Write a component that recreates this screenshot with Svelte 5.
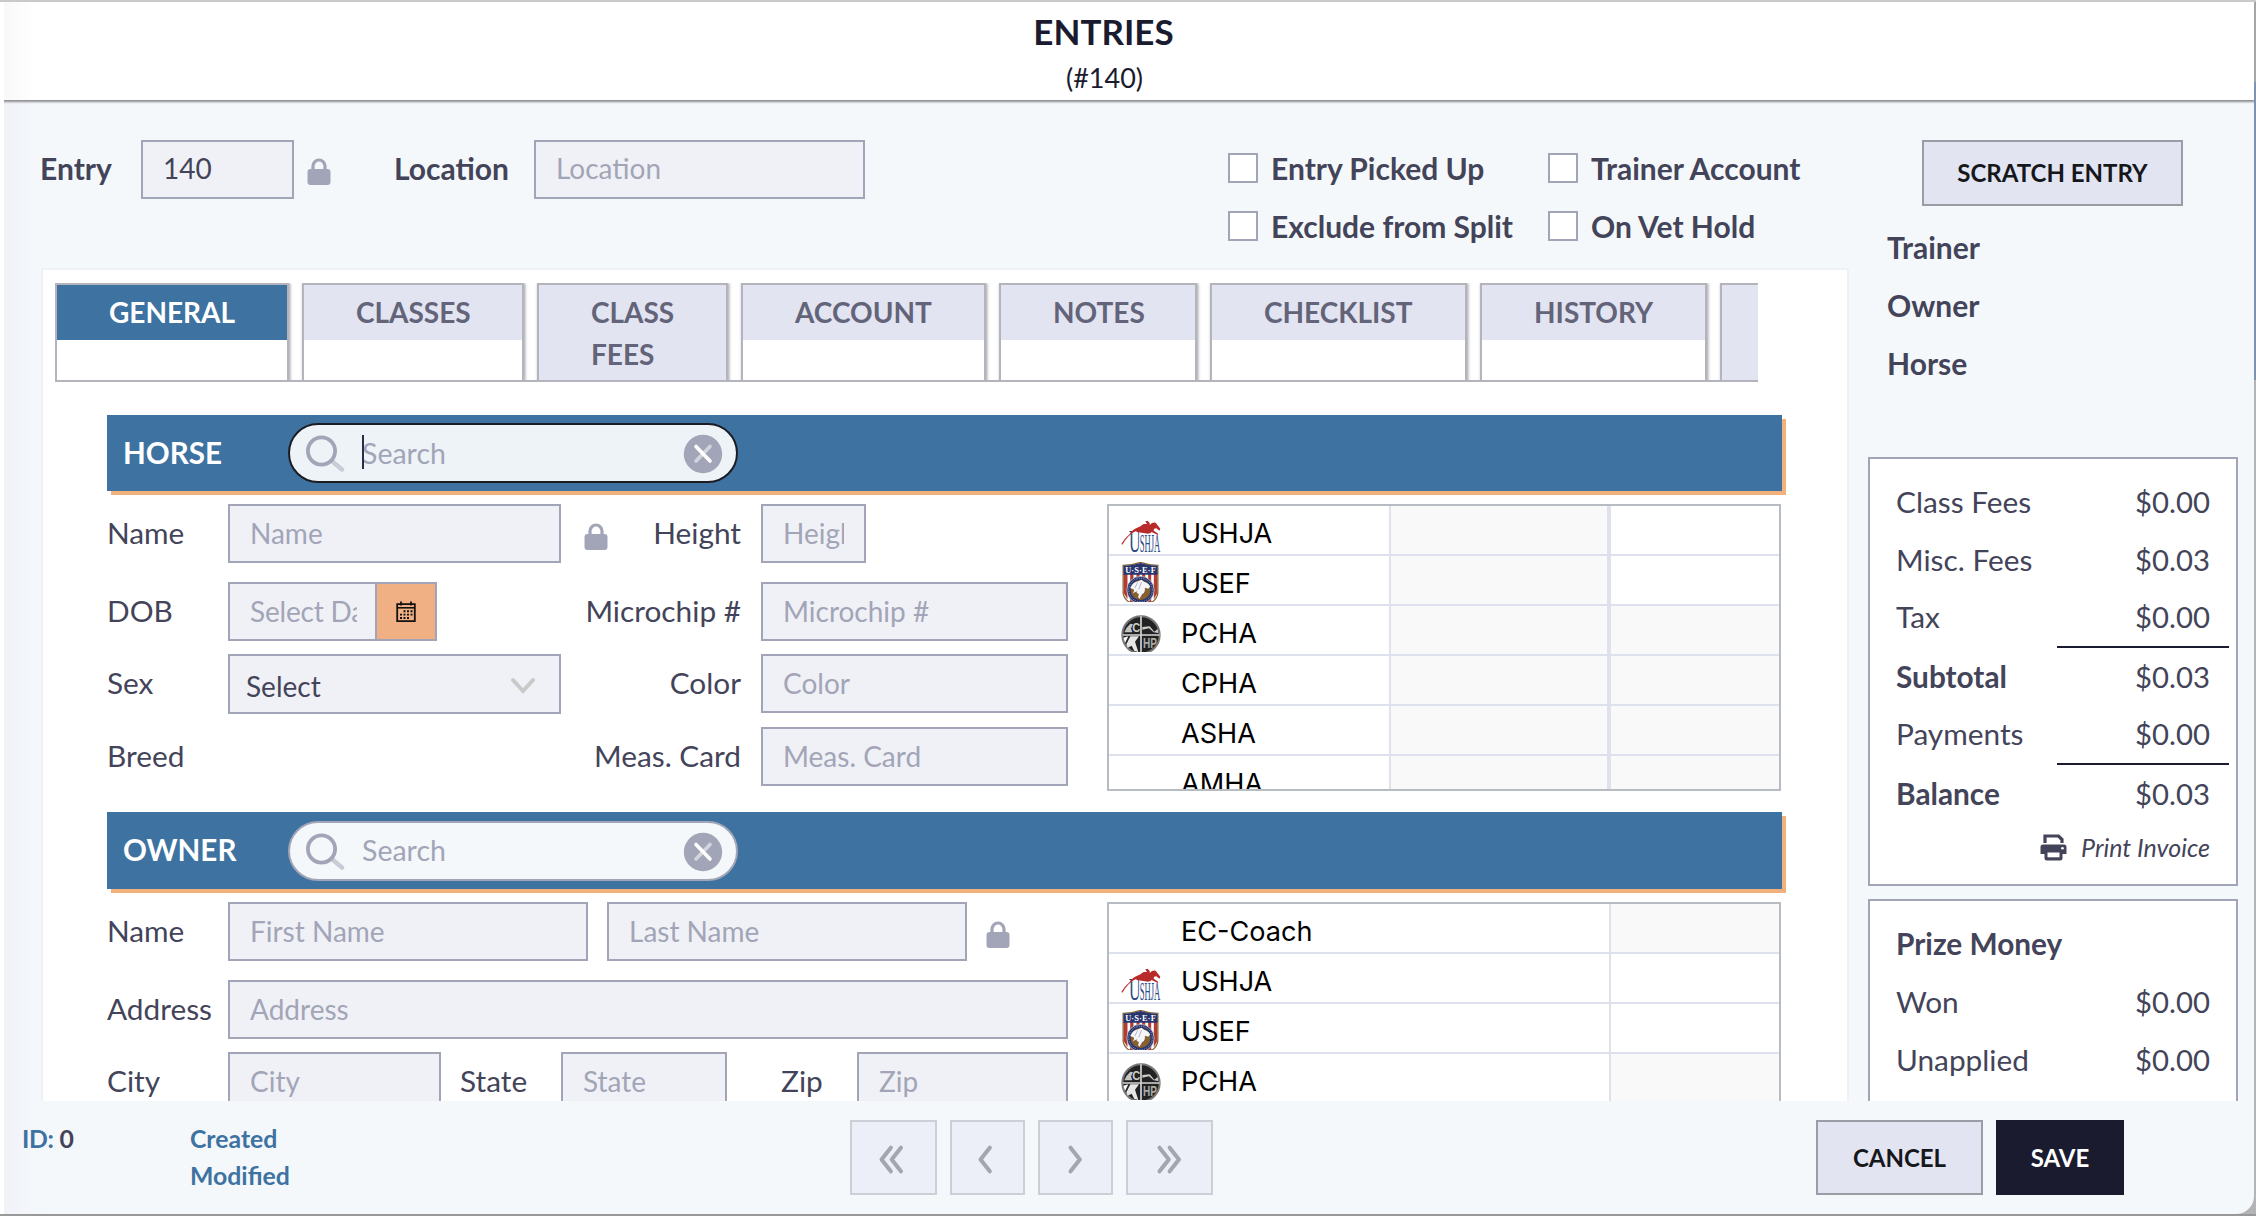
<script>
  const tabs = [
    { label: 'GENERAL', width: 234, active: true },
    { label: 'CLASSES', width: 222 },
    { label: 'CLASS FEES', width: 191, tall: true },
    { label: 'ACCOUNT', width: 245 },
    { label: 'NOTES', width: 198 },
    { label: 'CHECKLIST', width: 257 },
    { label: 'HISTORY', width: 227 },
    { label: '', width: 120, tall: true }
  ];
  const horseOrgs = [
    { name: 'USHJA', logo: 'ushja', open: true },
    { name: 'USEF', logo: 'usef', open: true },
    { name: 'PCHA', logo: 'pcha' },
    { name: 'CPHA' },
    { name: 'ASHA' },
    { name: 'AMHA' }
  ];
  const ownerOrgs = [
    { name: 'EC-Coach' },
    { name: 'USHJA', logo: 'ushja', open: true },
    { name: 'USEF', logo: 'usef', open: true },
    { name: 'PCHA', logo: 'pcha' }
  ];
  const checks = ['Entry Picked Up', 'Trainer Account', 'Exclude from Split', 'On Vet Hold'];
</script>

{#snippet lock()}
  <svg class="lock" width="24" height="28" viewBox="0 0 24 28">
    <path d="M6 12V8a6 6 0 0 1 12 0v4" fill="none" stroke="#a2a5b7" stroke-width="3.2" />
    <rect x="0.5" y="11" width="23" height="16" rx="3" fill="#a2a5b7" />
  </svg>
{/snippet}

{#snippet logo(kind)}
  {#if kind === 'ushja'}
    <svg class="logo" width="40" height="32" viewBox="0 0 120 96">
      <text transform="translate(24 95) scale(0.5 1)" font-family="Liberation Serif" font-size="96" fill="#2c4a86">U</text>
      <text transform="translate(56 95) scale(0.34 1)" font-family="Liberation Serif" font-size="76" fill="#2c4a86">SHJA</text>
      <path d="M1 72Q12 54 26 42Q34 28 52 22Q58 20 62 16L68 12L78 12L73 4L79 2L84 6Q88 10 86 15Q94 6 104 8L118 26L115 32L106 25L99 26L98 32L110 40L112 46L100 40L92 36Q86 44 72 40Q56 38 44 34Q24 42 4 74Z" fill="#b92b2b" />
    </svg>
  {:else if kind === 'usef'}
    <svg class="logo usef" width="37" height="40" viewBox="0 0 110 120">
      <path d="M3 10Q30 10 55 1Q80 10 107 10V92Q106 108 90 120H20Q4 108 3 92Z" fill="#fff" stroke="#8a6a3a" stroke-width="4" />
      <path d="M5 34H16V112L5 94ZM24 34H34V120H24ZM43 34H52V120H43ZM60 34H69V120H60ZM78 34H87V120H78ZM95 34H105V94L95 112Z" fill="#b53a34" />
      <path d="M4 11Q30 11 55 3Q80 11 106 11V38H4Z" fill="#28356e" />
      <text x="9" y="34" font-family="Liberation Serif" font-weight="bold" font-size="25" textLength="92" fill="#fff">U·S·E·F</text>
      <circle cx="55" cy="84" r="41" fill="#28356e" stroke="#e8e2d8" stroke-width="2" />
      <circle cx="55" cy="84" r="30" fill="#866030" />
      <circle cx="55" cy="84" r="35.500" fill="none" stroke="#a9aecb" stroke-width="3" stroke-dasharray="3 4" />
      <path d="M24 78Q32 60 48 58L58 53L66 60Q78 62 84 74L78 80L68 77Q70 92 60 96L52 110L48 106L50 96Q42 94 44 88L32 94Q38 86 34 82Z" fill="#f5f5f8" />
      <path d="M46 62L38 78M58 60L50 82" stroke="#8f94b4" stroke-width="2" />
    </svg>
  {:else if kind === 'pcha'}
    <svg class="logo" width="40" height="37" viewBox="0 0 120 111">
      <circle cx="60" cy="60" r="56" fill="#222" stroke="#777" stroke-width="6" />
      <path d="M60 4V111M5 60H116" stroke="#d5d5d5" stroke-width="5" />
      <path d="M10 52Q16 36 28 26L36 28L30 40L34 52Z" fill="#c4c4c4" />
      <path d="M64 44L84 40L98 52L112 54L110 42L100 50L86 34L64 36Z" fill="#ccc" />
      <path d="M28 64L54 64L42 80L52 111L40 108L32 92L20 98L16 88Z" fill="#e6e6e6" />
      <path d="M7 68L22 64L12 84Z" fill="#fff" />
      <text x="34" y="50" font-family="Liberation Sans" font-weight="bold" font-size="36" textLength="24" lengthAdjust="spacingAndGlyphs" fill="#ccc">C</text>
      <text x="66" y="100" font-family="Liberation Sans" font-weight="bold" font-size="42" textLength="42" lengthAdjust="spacingAndGlyphs" fill="#aaa">HP</text>
    </svg>
  {/if}
{/snippet}

{#snippet banner(title, focused)}
  <div class="banner" class:second={!focused}>
    <h2>{title}</h2>
    <div class="search" class:focused>
      <svg width="40" height="40" viewBox="0 0 40 40">
        <path d="M28 28L37 35.5" stroke="#c9cbd6" stroke-width="4.4" stroke-linecap="round" />
        <circle cx="16.5" cy="17" r="13.6" fill="none" stroke="#a2a5b7" stroke-width="3.8" />
      </svg>
      <div class="query">
        {#if focused}<span class="caret"></span>{/if}
        <input placeholder="Search" />
      </div>
      <svg width="40" height="40" viewBox="0 0 40 40">
        <circle cx="20" cy="20" r="19.2" fill="#a2a5b7" />
        <path d="M27 12.5L13 27" stroke="#d3d5de" stroke-width="3.6" stroke-linecap="round" />
        <path d="M13 12.5L27 27" stroke="#fff" stroke-width="3.6" stroke-linecap="round" />
      </svg>
    </div>
  </div>
{/snippet}

{#snippet doubleChevron()}
  <path d="M14 2L3 16L14 30M26 2L15 16L26 30" />
{/snippet}

<div class="dialog">
  <header>
    <h1>ENTRIES</h1>
    <p>(#140)</p>
  </header>

  <div class="body">
    <main>
      <div class="top">
        <b class="lbl entry-lbl">Entry</b>
        <input class="entry" value="140" />
        {@render lock()}
        <b class="lbl loc-lbl">Location</b>
        <input class="location" placeholder="Location" />
        <div class="checks">
          {#each checks as c}
            <div class="check"><span class="box"></span><b class="lbl">{c}</b></div>
          {/each}
        </div>
      </div>

      <section class="panel">
        <nav>
          {#each tabs as t}
            <div class="tab" class:active={t.active} class:tall={t.tall} style:width="{t.width}px">
              <span>{t.label}</span>
            </div>
          {/each}
        </nav>

        {@render banner('HORSE', true)}
        <div class="split">
          <div class="form horse">
            <span class="lbl">Name</span>
            <input placeholder="Name" />
            <div class="mid">{@render lock()}<span class="lbl">Height</span></div>
            <input class="height" placeholder="Height" />

            <span class="lbl">DOB</span>
            <div class="date">
              <input placeholder="Select Date" />
              <span class="cal">
                <svg width="20" height="22" viewBox="0 0 20 22">
                  <path d="M1.2 3.2H18.8V20.2H1.2Z" fill="none" stroke="#111" stroke-width="1.8" />
                  <path d="M1 6.8H19" stroke="#111" stroke-width="1.6" />
                  <path d="M5 0.5V4.5M15 0.5V4.5" stroke="#111" stroke-width="1.8" />
                  <path d="M7.5 10.2H16.5M4 13.6H16.5M4 17H13" stroke="#111" stroke-width="1.9" stroke-dasharray="2 1.5" />
                </svg>
              </span>
            </div>
            <div class="mid"><span class="lbl">Microchip #</span></div>
            <input placeholder="Microchip #" />

            <span class="lbl">Sex</span>
            <div class="select">
              Select
              <svg width="26" height="18" viewBox="0 0 26 18">
                <path d="M3 3L13 14L23 3" fill="none" stroke="#c9c9c9" stroke-width="4" stroke-linecap="round" />
              </svg>
            </div>
            <div class="mid"><span class="lbl">Color</span></div>
            <input placeholder="Color" />

            <span class="lbl">Breed</span>
            <span></span>
            <div class="mid"><span class="lbl">Meas. Card</span></div>
            <input placeholder="Meas. Card" />
          </div>
          <div class="orgs horse-orgs">
            {#each horseOrgs as o}
              <div class="org">
                <span class="icon">{@render logo(o.logo)}</span>
                <span class="name">{o.name}</span>
                <span class="mid-cell"></span>
                <span class="end" class:open={o.open}></span>
              </div>
            {/each}
          </div>
        </div>

        {@render banner('OWNER', false)}
        <div class="split">
          <div class="form owner">
            <div class="line">
              <span class="lbl first">Name</span>
              <input class="fname" placeholder="First Name" />
              <input class="fname" placeholder="Last Name" />
              {@render lock()}
            </div>
            <div class="line">
              <span class="lbl first">Address</span>
              <input class="address" placeholder="Address" />
            </div>
            <div class="line">
              <span class="lbl first">City</span>
              <input class="city" placeholder="City" />
              <span class="lbl state-lbl">State</span>
              <input class="state" placeholder="State" />
              <span class="lbl zip-lbl">Zip</span>
              <input class="zip" placeholder="Zip" />
            </div>
          </div>
          <div class="orgs">
            {#each ownerOrgs as o}
              <div class="org wide">
                <span class="icon">{@render logo(o.logo)}</span>
                <span class="name">{o.name}</span>
                <span class="end" class:open={o.open}></span>
              </div>
            {/each}
          </div>
        </div>
      </section>
    </main>

    <aside>
      <button class="btn scratch">SCRATCH ENTRY</button>
      <div class="people"><b>Trainer</b><b>Owner</b><b>Horse</b></div>
      <div class="card totals">
        <div class="money"><span>Class Fees</span><span>$0.00</span></div>
        <div class="money"><span>Misc. Fees</span><span>$0.03</span></div>
        <div class="money tax"><span>Tax</span><span>$0.00</span></div>
        <hr />
        <div class="money"><b>Subtotal</b><span>$0.03</span></div>
        <div class="money pay"><span>Payments</span><span>$0.00</span></div>
        <hr />
        <div class="money"><b>Balance</b><span>$0.03</span></div>
        <div class="print">
          <svg width="27" height="27" viewBox="0 0 27 27">
            <path d="M5 9V2H18.5L22 5.5V9" fill="none" stroke="#434459" stroke-width="3.2" />
            <path d="M3 10.5H24Q26.5 10.5 26.5 13V20H22.5V24Q22.5 26.5 20 26.5H7Q4.500 26.500 4.500 24V20H0.500V13Q0.500 10.500 3 10.500Z" fill="#434459" />
            <rect x="7.500" y="18.500" width="12" height="4.800" fill="#fff" />
            <circle cx="22.500" cy="14.300" r="1.300" fill="#fff" />
          </svg>
          <i>Print Invoice</i>
        </div>
      </div>
      <div class="card prize">
        <div class="money"><b>Prize Money</b></div>
        <div class="money"><span>Won</span><span>$0.00</span></div>
        <div class="money"><span>Unapplied</span><span>$0.00</span></div>
      </div>
    </aside>
  </div>

  <footer>
    <div class="id">ID: <span>0</span></div>
    <div class="stamps"><div>Created</div><div>Modified</div></div>
    <div class="pager">
      <button class="wide-btn"><svg width="29" height="32" viewBox="0 0 29 32">{@render doubleChevron()}</svg></button>
      <button><svg width="17" height="32" viewBox="0 0 17 32"><path d="M14 2L3 16L14 30" /></svg></button>
      <button><svg class="flip" width="17" height="32" viewBox="0 0 17 32"><path d="M14 2L3 16L14 30" /></svg></button>
      <button class="wide-btn"><svg class="flip" width="29" height="32" viewBox="0 0 29 32">{@render doubleChevron()}</svg></button>
    </div>
    <button class="btn cancel">CANCEL</button>
    <button class="btn save">SAVE</button>
  </footer>
</div>

<style>
  :global(body) {
    background: linear-gradient(#c9c9c9 0 2px, transparent 2px 1214px, #999 1214px),
      linear-gradient(90deg, #fff 0 50%, transparent 50%),
      linear-gradient(#a5a5a8 0 82px, #7d92b4 82px 380px, #b4b4b6 380px);
    font-family: Lato, 'Liberation Sans', sans-serif;
    color: #434459;
    overflow: hidden;
  }
  * { box-sizing: border-box; }
  h1, h2, p { margin: 0; }
  .dialog {
    width: 2250px;
    height: 1212px;
    margin: 2px 2px 2px 4px;
    background: linear-gradient(90deg, #f1f2f8, #f4f8fb 37px);
    border-radius: 0 0 18px 0;
    overflow: hidden;
    display: flex;
    flex-direction: column;
  }
  header {
    height: 98px;
    flex: none;
    background: linear-gradient(90deg, #f8f8f9, #fff 32px);
    box-shadow: 0 1px 2px 1px #8d8d8d;
    color: #1a1b2f;
    text-align: center;
    padding-right: 55px;
    padding-left: 10px;
    position: relative;
  }
  h1 { font-size: 35px; line-height: 42px; font-weight: 700; padding: 8px 2px 0 0; }
  header p { font-size: 27px; line-height: 32px; padding-top: 10px; }
  header p, header h1 { margin-left: -4px; }
  .body { height: 1001px; flex: none; overflow: hidden; display: flex; }
  main { width: 1845px; padding-left: 37px; flex: none; }
  .top { height: 168px; padding-top: 40px; display: flex; align-items: flex-start; }
  .lbl { font-size: 29.8px; line-height: 58px; height: 58px; white-space: nowrap; }
  .entry-lbl, .loc-lbl, .check .lbl { font-size: 30px; line-height: 56px; }
  input, .select {
    font: 28px Lato, sans-serif;
    color: #434459;
    height: 59px;
    min-width: 0;
    border: 2px solid #a2a5b7;
    border-radius: 0;
    background: #f0f1f6;
    padding: 0 20px 2px;
    outline: none;
  }
  .top input { padding-bottom: 3px; }
  input::placeholder { color: #a2a5b7; opacity: 1; }
  .lock { flex: none; }
  .entry-lbl { width: 101px; margin-left: -1px; }
  .entry { width: 153px; }
  .top .lock { margin: 18px 63px 0 13px; }
  .loc-lbl { width: 140px; }
  .location { width: 331px; }
  .checks {
    margin-left: 363px;
    display: grid;
    grid-template-columns: 320px 300px;
    grid-auto-rows: 58px;
  }
  .check { display: flex; gap: 13px; }
  .box { width: 30px; height: 30px; margin-top: 13px; border: 2px solid #a2a5b7; background: #fff; }

  .panel {
    border: 2px solid #eef1f6;
    background: #fff;
    height: 900px;
    padding: 13px 0 0 12px;
  }
  nav {
    width: 1703px;
    height: 99px;
    border-bottom: 2px solid #b3b4bc;
    overflow: hidden;
    display: flex;
    gap: 13px;
  }
  .tab {
    flex: none;
    height: 110px;
    border: 2px solid #b3b4bc;
    box-shadow: 1px 0 3px #9a9aa2;
    background: #fff;
    color: #636479;
    font-size: 28px;
    font-weight: 700;
    line-height: 42px;
  }
  .tab span { display: block; height: 55px; padding: 6px 50px 0 52px; background: #e2e4f1; }
  .tab.tall { background: #e2e4f1; }
  .tab.active { color: #fff; }
  .tab.active span { background: #3d72a1; }

  .banner {
    width: 1675px;
    height: 76px;
    margin: 33px 0 13px 52px;
    background: #3d72a1;
    box-shadow: 4px 4px 0 #f2b07c;
    display: flex;
    align-items: center;
  }
  .banner.second { margin-top: 21px; height: 77px; }
  h2 { width: 181px; padding-left: 16px; color: #fff; font-size: 29.6px; line-height: 40px; }
  .second h2 { padding-bottom: 1px; }
  .search {
    width: 450px;
    height: 60px;
    border: 2px solid #a2a5b7;
    border-radius: 30px;
    background: #f4f8fb;
    display: flex;
    align-items: center;
    padding: 2px 13px 0 15px;
  }
  .focused { border-color: #1c1d24; background: #edf3f7; }
  .query { flex: 1; display: flex; align-items: center; margin-left: 17px; position: relative; }
  .query input { width: 300px; border: 0; padding: 0 0 3px; height: 50px; background: none; font-size: 28.5px; }
  .caret { position: absolute; left: 0; top: 6px; width: 2px; height: 34px; background: #2b2c45; }

  .split { display: flex; margin-left: 52px; }
  .form { width: 1000px; }
  .horse {
    display: grid;
    grid-template-columns: 121px 333px 180px 307px;
    grid-template-rows: 78px 72px 73px 60px;
    align-items: start;
    align-content: start;
    column-gap: 0;
  }
  .horse > :nth-child(4n) { margin-left: 20px; width: 307px; }
  .horse > .height { width: 105px; }
  .mid { display: flex; justify-content: flex-end; }
  .mid .lock { margin: 19px auto 0 23px; }
  .date { display: flex; }
  .date input { width: 149px; padding-right: 18px; letter-spacing: -0.2px; }
  .cal {
    width: 60px;
    height: 59px;
    border: 2px solid #a2a5b7;
    border-left: 0;
    background: #f1b083;
    display: flex;
    align-items: center;
    justify-content: center;
    padding-right: 1px;
  }
  .select { height: 60px; padding: 3px 23px 0 16px; display: flex; align-items: center; justify-content: space-between; }
  .line { display: flex; height: 78px; }
  .line:nth-child(2) { height: 72px; }
  .first { width: 121px; flex: none; }
  .fname { width: 360px; margin-right: 19px; }
  .line .lock { margin-top: 19px; }
  .address { width: 840px; }
  .city { width: 213px; margin-right: 19px; }
  .state-lbl { width: 101px; }
  .state { width: 166px; }
  .zip-lbl { width: 130px; padding-left: 54px; }
  .zip { width: 211px; }

  .orgs {
    width: 674px;
    border: 2px solid #b7bcc3;
    font-family: Inter, sans-serif;
    font-size: 27.1px;
    color: #000;
    overflow: hidden;
  }
  .horse-orgs { height: 287px; }
  .org {
    display: grid;
    grid-template-columns: 72px 208px 218px 172px;
    height: 50px;
    border-bottom: 2px solid #dde1eb;
  }
  .org.wide { grid-template-columns: 72px 428px 170px; }
  .icon { display: flex; align-items: flex-end; padding: 0 0 2px 12px; height: 48px; }
  .usef { margin-left: 1px; }
  .name { line-height: 34px; padding-top: 11px; height: 48px; }
  .mid-cell { background: #f9f9f9; border-left: 2px solid #dfe2eb; }
  .end { background: #f9f9f9; border-left: 4px solid #dfe1ec; }
  .wide .end { border-left-width: 2px; }
  .end.open { background: #fff; }

  aside { padding: 40px 0 0 19px; width: 389px; }
  .btn {
    font: 700 24px Lato, sans-serif;
    border: 2px solid #9b9da6;
    background: #e2e4f1;
    color: #16171b;
    padding: 0 0 1px;
  }
  .scratch { display: block; width: 261px; height: 66px; margin-left: 54px; }
  .people { margin: 12px 0 0 19px; height: 239px; font-size: 30px; line-height: 58px; }
  .people b { display: block; }
  .card { width: 370px; border: 2px solid #a2a5b7; background: #fff; font-size: 29.8px; }
  .totals { height: 429px; margin-bottom: 13px; padding-top: 14px; }
  .prize { height: 300px; padding-top: 14px; }
  .money { display: flex; justify-content: space-between; height: 58px; line-height: 58px; padding: 0 26px 0 26px; }
  .money span:last-child { font-size: 29.3px; }
  .money.tax, .money.pay { height: 57px; line-height: 56px; }
  hr { width: 172px; height: 2px; border: 0; margin: 0 7px 0 auto; background: #1a1b2f; }
  hr + .money { line-height: 58px; height: 58px; }
  .print { display: flex; justify-content: flex-end; gap: 14px; padding: 11px 26px 0 0; font-size: 25px; line-height: 26px; }

  footer { display: flex; flex: 1; padding-top: 19px; color: #3d72a1; font-size: 24.8px; font-weight: 700; }
  .id { width: 168px; padding-left: 18px; line-height: 38px; letter-spacing: -0.3px; }
  .id span { color: #434459; }
  .stamps { width: 678px; padding-left: 18px; line-height: 37px; }
  .pager { display: flex; gap: 13px; width: 966px; }
  .pager button { width: 75px; height: 75px; padding: 0; border: 2px solid #cdced6; background: #eceff7; display: flex; align-items: center; justify-content: center; }
  .pager .wide-btn { width: 87px; }
  .pager svg { width: auto; height: 27px; fill: none; stroke: #a3a5af; stroke-width: 4.8; stroke-linecap: round; stroke-linejoin: round; margin: 4px 4px 0 0; overflow: visible; }
  .pager svg.flip { transform: scaleX(-1); margin: 4px 1px 0 0; }
  .cancel { width: 167px; height: 75px; }
  .save { width: 128px; height: 75px; margin-left: 13px; background: #1a1b2f; border: 0; color: #fff; }
</style>
